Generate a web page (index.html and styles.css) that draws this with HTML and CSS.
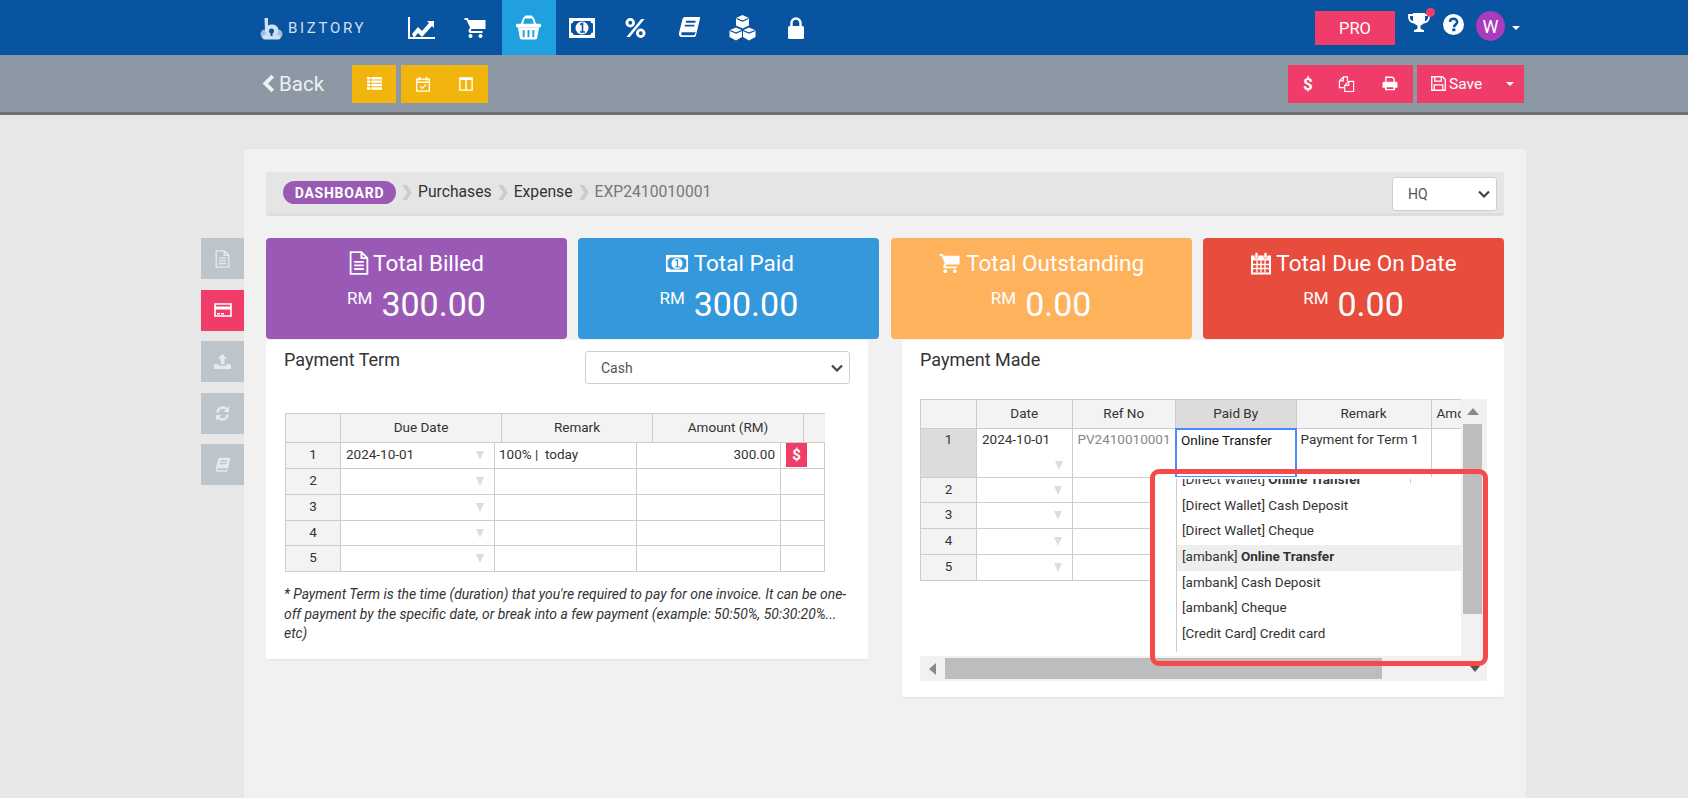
FILE: index.html
```html
<!DOCTYPE html>
<html lang="en">
<head>
<meta charset="utf-8">
<title>Expense EXP2410010001</title>
<link rel="stylesheet" href="styles.css">
</head>
<body>
<svg class="sprite" width="0" height="0">
  <symbol id="i-chart" viewBox="0 0 28 24"><path d="M1 1v21h26" fill="none" stroke="currentColor" stroke-width="2"/><path d="M4 18l6-7 4 4 7-8-2-2h7v7l-2-2-10 11-4-4-4 5z" fill="currentColor"/></symbol>
  <symbol id="i-cart" viewBox="0 0 24 24"><path d="M7 18c-1.1 0-2 .9-2 2s.9 2 2 2 2-.9 2-2-.9-2-2-2zM1 2v2h2l3.6 7.6-1.35 2.4c-.16.3-.25.6-.25 1 0 1.1.9 2 2 2h12v-2H7.4c-.14 0-.25-.1-.25-.25l.03-.1.9-1.65H22V4H5.2l-.9-2H1zm16 16c-1.1 0-2 .9-2 2s.9 2 2 2 2-.9 2-2-.9-2-2-2z" fill="currentColor"/></symbol>
  <symbol id="i-basket" viewBox="0 0 28 28"><path d="M7 11l2-6c.3-1 1-1.500 2-1.500h6c1 0 1.700.5 2 1.500l2 6" fill="none" stroke="currentColor" stroke-width="2"/><rect x="10" y="1.500" width="8" height="3" rx="1" fill="currentColor"/><rect x="1" y="10" width="26" height="4" rx="1.500" fill="currentColor"/><path d="M3 14h22l-2 11c-.2 1-1 1.500-2 1.500H7c-1 0-1.800-.5-2-1.500zM8 16.500v7.500h2v-7.500zm5 0v7.500h2v-7.500zm5 0v7.500h2v-7.500z" fill="currentColor" fill-rule="evenodd"/></symbol>
  <symbol id="i-money" viewBox="0 0 26 20"><path d="M0 0h26v20H0zM4.500 3c0 1.500-1 2.500-2.500 2.500v9c1.500 0 2.500 1 2.500 2.500h17c0-1.500 1-2.500 2.500-2.500v-9c-1.500 0-2.500-1-2.500-2.500z" fill="currentColor" fill-rule="evenodd"/><circle cx="13" cy="10" r="6.500" fill="currentColor"/><path d="M11 6.500l2.500-1v8M11 14h5" fill="none" stroke="var(--cut)" stroke-width="1.600"/></symbol>
  <symbol id="i-percent" viewBox="0 0 22 22"><path d="M17 1.500h3.500L5 20.500H1.500z" fill="currentColor"/><circle cx="5.500" cy="5.500" r="3.500" fill="none" stroke="currentColor" stroke-width="3"/><circle cx="16.500" cy="16.500" r="3.500" fill="none" stroke="currentColor" stroke-width="3"/></symbol>
  <symbol id="i-book" viewBox="0 0 24 24"><path d="M7 1h15c1 0 1.300.7 1 1.700L18.800 20c-.3 1-1 2-2.500 2H4c-2 0-3.500-1.500-3-4L4.500 4C5 2 6 1 7 1zM8.500 5l-.5 2h10l.5-2zM7.300 9l-.5 2h10l.5-2zM4.500 17c-1.500 0-1.500 3 0 3h12c.6 0 .9-.3 1.100-1l.9-2z" fill="currentColor" fill-rule="evenodd"/></symbol>
  <symbol id="i-cubes" viewBox="0 0 28 26"><path d="M14 0l6.500 3v7.500L14 13.500l-6.500-3V3zM7.500 12.500l6 2.700V22l-6 3.500L1 22v-6.800zm13 0l6.500 2.700V22l-6.500 3.500-6-3.500v-6.800z" fill="currentColor"/><path d="M8 3.500l6 2.500 6-2.500M1.500 15.500l6 2.500 6-2.500M14.500 15.500l6 2.500 6-2.500" fill="none" stroke="var(--cut)" stroke-width="1.300"/></symbol>
  <symbol id="i-lock" viewBox="0 0 16 22"><path d="M3.500 9V6a4.500 4.500 0 0 1 9 0v3" fill="none" stroke="currentColor" stroke-width="2.400"/><rect x="0" y="9" width="16" height="13" rx="1.500" fill="currentColor"/></symbol>
  <symbol id="i-list" viewBox="0 0 16 14"><path d="M0 0h3.500v2.600H0zm4.500 0H16v2.600H4.500zM0 3.700h3.500v2.600H0zm4.500 0H16v2.600H4.500zM0 7.400h3.500V10H0zm4.500 0H16V10H4.500zM0 11.100h3.500v2.600H0zm4.500 0H16v2.600H4.500z" fill="currentColor"/></symbol>
  <symbol id="i-calcheck" viewBox="0 0 16 18"><path d="M.8 3.500h14.400v13.700H.8zM.8 7h14.400" fill="none" stroke="currentColor" stroke-width="1.500"/><path d="M4 1v4M12 1v4" stroke="currentColor" stroke-width="1.800"/><path d="M4.500 11.500l2.500 2.500 4.500-4.500" fill="none" stroke="currentColor" stroke-width="1.300"/></symbol>
  <symbol id="i-columns" viewBox="0 0 16 16"><path d="M1 1h14v14H1zM8 1v14" fill="none" stroke="currentColor" stroke-width="1.600"/><path d="M1 1h14v2.500H1z" fill="currentColor"/></symbol>
  <symbol id="i-copy" viewBox="0 0 18 18"><path d="M1 5.500L5.500 1H10v5M1 5.500h4.500V1M1 5.500V13h5.500" fill="none" stroke="currentColor" stroke-width="1.300"/><path d="M7 10.500L11.500 6H17v11.500H7zM7 10.500h4.500V6" fill="none" stroke="currentColor" stroke-width="1.300"/></symbol>
  <symbol id="i-print" viewBox="0 0 18 18"><path d="M4 7V1.500h8l2 2V7" fill="none" stroke="currentColor" stroke-width="1.600"/><path d="M2 7h14c1 0 2 .8 2 2v5h-3v3H3v-3H0V9c0-1.200 1-2 2-2zm3 6.500v2h8v-2z" fill="currentColor" fill-rule="evenodd"/></symbol>
  <symbol id="i-save" viewBox="0 0 16 16"><path d="M.8.800h11.500l2.900 2.900v11.500H.8z" fill="none" stroke="currentColor" stroke-width="1.400"/><path d="M4 1v4.500h7V1M3.500 15V9.500h9V15" fill="none" stroke="currentColor" stroke-width="1.400"/></symbol>
  <symbol id="i-trophy" viewBox="0 0 22 22"><path d="M5 1h12v7c0 3-2.500 5-4.500 5.500V16c0 1 1.500 1.800 3.500 2v2H6v-2c2-.2 3.500-1 3.500-2v-2.500C7.500 13 5 11 5 8z" fill="currentColor"/><path d="M5 3H1v2c0 3 2 5 5 5.500M17 3h4v2c0 3-2 5-5 5.500" fill="none" stroke="currentColor" stroke-width="1.800"/></symbol>
  <symbol id="i-help" viewBox="0 0 20 20"><circle cx="10" cy="10" r="10" fill="currentColor"/><path d="M6.500 7.500C6.800 5.500 8.300 4.500 10 4.500c2 0 3.500 1.300 3.500 3 0 2.500-3 2.500-3 5" fill="none" stroke="var(--cut)" stroke-width="2.400"/><rect x="8.800" y="13.800" width="3" height="2.600" fill="var(--cut)"/></symbol>
  <symbol id="i-file" viewBox="0 0 16 20"><path d="M1 1h9l5 5v13H1zM10 1v5h5" fill="none" stroke="currentColor" stroke-width="1.500"/><path d="M4 9h8M4 12h8M4 15h8" stroke="currentColor" stroke-width="1.500"/></symbol>
  <symbol id="i-card" viewBox="0 0 18 14"><path d="M1 1h16v12H1z" fill="none" stroke="currentColor" stroke-width="1.600"/><path d="M1 3.500h16v3H1zM3 10h3v1.400H3zm4 0h3v1.400H7z" fill="currentColor"/></symbol>
  <symbol id="i-upload" viewBox="0 0 18 16"><path d="M9 0l5 5h-3v6H7V5H4zM0 11h5v1.500h8V11h5v5H0z" fill="currentColor"/></symbol>
  <symbol id="i-refresh" viewBox="0 0 16 18"><path d="M2.500 8a5.800 5.800 0 0 1 10-3.500M13.500 10a5.800 5.800 0 0 1-10 3.500" fill="none" stroke="currentColor" stroke-width="2.600"/><path d="M15 1v6.500H9zM1 17v-6.500h6z" fill="currentColor"/></symbol>
  <symbol id="i-calendar" viewBox="0 0 22 22"><path d="M1 3h20v19H1z" fill="currentColor"/><path d="M3 8h16v12H3z" fill="var(--cut)"/><path d="M3 12h16M3 16h16M7 8v12M11 8v12M15 8v12" stroke="currentColor" stroke-width="1.300"/><rect x="5" y="0" width="3" height="6" rx="1.200" fill="currentColor" stroke="var(--cut)" stroke-width=".6"/><rect x="14" y="0" width="3" height="6" rx="1.200" fill="currentColor" stroke="var(--cut)" stroke-width=".6"/></symbol>
  <symbol id="i-crumb" viewBox="0 0 10 18"><path d="M0 1h5l5 8-5 8H0l5-8z" fill="currentColor"/></symbol>
  <symbol id="i-chev" viewBox="0 0 12 8"><path d="M1 1.500l5 5 5-5" fill="none" stroke="currentColor" stroke-width="2.200"/></symbol>
  <symbol id="i-back" viewBox="0 0 12 18"><path d="M10 2L3 9l7 7" fill="none" stroke="currentColor" stroke-width="3.600"/></symbol>
  <symbol id="i-logo" viewBox="0 0 22 22"><path d="M4 0h3.500v7.500c1.200-.8 2.500-1 4-1 4 0 6.500 2.500 6.500 6 0 4-3 6-7 6-4 0-6.500-2-6.500-6z" fill="currentColor"/><circle cx="4.500" cy="16" r="4.500" fill="currentColor" opacity=".75"/><circle cx="17.500" cy="16" r="4.500" fill="currentColor" opacity=".75"/><rect x="2" y="17" width="18" height="4.500" rx="2" fill="currentColor"/><circle cx="11" cy="13" r="2.500" fill="#0854a0"/><rect x="10" y="14" width="2" height="4" fill="#0854a0"/></symbol>
</svg>

<header class="topbar">
  <a class="logo"><svg class="logo-mark"><use href="#i-logo"/></svg><span class="logo-text">BIZTORY</span></a>
  <nav class="nav">
    <a class="nav-item"><svg class="ic-chart"><use href="#i-chart"/></svg></a>
    <a class="nav-item"><svg class="ic-cart"><use href="#i-cart"/></svg></a>
    <a class="nav-item active"><svg class="ic-basket"><use href="#i-basket"/></svg></a>
    <a class="nav-item"><svg class="ic-money"><use href="#i-money"/></svg></a>
    <a class="nav-item"><svg class="ic-percent"><use href="#i-percent"/></svg></a>
    <a class="nav-item"><svg class="ic-book"><use href="#i-book"/></svg></a>
    <a class="nav-item"><svg class="ic-cubes"><use href="#i-cubes"/></svg></a>
    <a class="nav-item"><svg class="ic-lock"><use href="#i-lock"/></svg></a>
  </nav>
  <div class="top-right">
    <a class="pro">PRO</a>
    <span class="trophy"><svg class="ic-trophy"><use href="#i-trophy"/></svg><i class="dot"></i></span>
    <svg class="ic-help"><use href="#i-help"/></svg>
    <span class="avatar">W</span>
    <i class="caret caret-top"></i>
  </div>
</header>

<div class="subbar">
  <a class="back"><svg class="ic-back"><use href="#i-back"/></svg><span>Back</span></a>
  <div class="yellow-group one"><svg class="ic-list"><use href="#i-list"/></svg></div>
  <div class="yellow-group two"><svg class="ic-calcheck"><use href="#i-calcheck"/></svg><svg class="ic-columns"><use href="#i-columns"/></svg></div>
  <div class="actions">
    <div class="pink-group"><span class="dollar">$</span><svg class="ic-copy"><use href="#i-copy"/></svg><svg class="ic-print"><use href="#i-print"/></svg></div>
    <div class="pink-save"><svg class="ic-save"><use href="#i-save"/></svg><span class="save-label">Save</span><i class="caret caret-save"></i></div>
  </div>
</div>

<main class="main">
  <aside class="tabs">
    <a class="tab"><svg class="ic-tab-file"><use href="#i-file"/></svg></a>
    <a class="tab on"><svg class="ic-tab-card"><use href="#i-card"/></svg></a>
    <a class="tab"><svg class="ic-tab-upload"><use href="#i-upload"/></svg></a>
    <a class="tab"><svg class="ic-tab-refresh"><use href="#i-refresh"/></svg></a>
    <a class="tab"><svg class="ic-tab-book"><use href="#i-book"/></svg></a>
  </aside>

  <section class="panel">
    <div class="crumbs">
      <a class="pill">DASHBOARD</a>
      <svg class="sep"><use href="#i-crumb"/></svg><a class="crumb">Purchases</a>
      <svg class="sep"><use href="#i-crumb"/></svg><a class="crumb">Expense</a>
      <svg class="sep"><use href="#i-crumb"/></svg><span class="crumb current">EXP2410010001</span>
      <div class="select select-hq"><span>HQ</span><svg class="chev"><use href="#i-chev"/></svg></div>
    </div>

    <div class="stats">
      <div class="stat purple"><div class="stat-title"><svg class="ic-s-file"><use href="#i-file"/></svg>Total Billed</div><div class="stat-value"><sup>RM</sup>300.00</div></div>
      <div class="stat blue"><div class="stat-title"><svg class="ic-s-money"><use href="#i-money"/></svg>Total Paid</div><div class="stat-value"><sup>RM</sup>300.00</div></div>
      <div class="stat orange"><div class="stat-title"><svg class="ic-s-cart"><use href="#i-cart"/></svg>Total Outstanding</div><div class="stat-value"><sup>RM</sup>0.00</div></div>
      <div class="stat red"><div class="stat-title"><svg class="ic-s-cal"><use href="#i-calendar"/></svg>Total Due On Date</div><div class="stat-value"><sup>RM</sup>0.00</div></div>
    </div>

    <div class="columns">
      <div class="card card-left">
        <div class="card-head">
          <h2>Payment Term</h2>
          <div class="select select-term"><span>Cash</span><svg class="chev"><use href="#i-chev"/></svg></div>
        </div>
        <div class="grid-wrap">
          <div class="row lhead">
            <div class="c"></div><div class="c">Due Date</div><div class="c">Remark</div><div class="c">Amount (RM)</div><div class="c noline"></div>
          </div>
          <div class="row lbody h26">
            <div class="c rh">1</div><div class="c date">2024-10-01<i class="tri"></i></div><div class="c txt">100% |&nbsp; today</div><div class="c num">300.00</div><div class="c act"><span class="pay">$</span></div>
          </div>
          <div class="row lbody h26"><div class="c rh">2</div><div class="c date"><i class="tri"></i></div><div class="c"></div><div class="c"></div><div class="c"></div></div>
          <div class="row lbody h26"><div class="c rh">3</div><div class="c date"><i class="tri"></i></div><div class="c"></div><div class="c"></div><div class="c"></div></div>
          <div class="row lbody h25"><div class="c rh">4</div><div class="c date"><i class="tri"></i></div><div class="c"></div><div class="c"></div><div class="c"></div></div>
          <div class="row lbody h26"><div class="c rh">5</div><div class="c date"><i class="tri"></i></div><div class="c"></div><div class="c"></div><div class="c"></div></div>
        </div>
        <p class="note">* Payment Term is the time (duration) that you're required to pay for one invoice. It can be one-off payment by the specific date, or break into a few payment (example: 50:50%, 50:30:20%... etc)</p>
      </div>

      <div class="card card-right">
        <h2 class="made">Payment Made</h2>
        <div class="sheet">
          <div class="sheet-top">
            <div class="sheet-grid">
              <div class="row rhead">
                <div class="c"></div><div class="c">Date</div><div class="c">Ref No</div><div class="c hl">Paid By</div><div class="c">Remark</div><div class="c amo">Amo</div>
              </div>
              <div class="row rbody tall">
                <div class="c rh hl top">1</div><div class="c date top">2024-10-01<i class="tri low"></i></div><div class="c ref top">PV2410010001</div><div class="c focus">Online Transfer</div><div class="c txt top">Payment for Term 1</div><div class="c"></div>
              </div>
              <div class="row rbody h25"><div class="c rh">2</div><div class="c date"><i class="tri"></i></div><div class="c"></div><div class="c"></div><div class="c"></div><div class="c"></div></div>
              <div class="row rbody h26"><div class="c rh">3</div><div class="c date"><i class="tri"></i></div><div class="c"></div><div class="c"></div><div class="c"></div><div class="c"></div></div>
              <div class="row rbody h26"><div class="c rh">4</div><div class="c date"><i class="tri"></i></div><div class="c"></div><div class="c"></div><div class="c"></div><div class="c"></div></div>
              <div class="row rbody h26"><div class="c rh">5</div><div class="c date"><i class="tri"></i></div><div class="c"></div><div class="c"></div><div class="c"></div><div class="c"></div></div>
            </div>
            <div class="vscroll"><i class="arrow-up"></i><i class="vthumb"></i></div>
          </div>
          <div class="hscroll"><i class="arrow-left"></i><i class="hthumb"></i><i class="arrow-down"></i></div>
          <div class="dropdown">
            <ul class="drop-list">
              <li>[Direct Wallet] <b>Online Transfer</b></li>
              <li>[Direct Wallet] Cash Deposit</li>
              <li>[Direct Wallet] Cheque</li>
              <li class="sel">[ambank] <b>Online Transfer</b></li>
              <li>[ambank] Cash Deposit</li>
              <li>[ambank] Cheque</li>
              <li>[Credit Card] Credit card</li>
            </ul>
          </div>
          <div class="annotation"></div>
        </div>
      </div>
    </div>
  </section>
</main>
</body>
</html>
```

FILE: styles.css
```css
* { box-sizing: border-box; }
html, body { margin: 0; height: 100%; }
body {
  height: 798px;
  overflow: hidden;
  background: #e7e7e7;
  color: #333;
  font-family: Roboto, "Liberation Sans", sans-serif;
  font-size: 13.5px;
}
.sprite { position: absolute; }
svg { display: block; flex: none; color: inherit; }

/* top bar */
.topbar {
  --cut: #0854a0;
  display: flex;
  align-items: stretch;
  height: 55px;
  padding: 0 168px 0 260px;
  background: #0854a0;
  color: #fff;
}
.logo { display: flex; align-items: center; width: 135px; gap: 5px; color: #cfe0f0; }
.logo-mark { width: 23px; height: 22px; margin-top: 2px; }
.logo-text { font-size: 15px; letter-spacing: 2.7px; }
.nav { display: flex; }
.nav-item { width: 53.5px; display: flex; align-items: center; justify-content: center; }
.nav-item.active { background: #20a0de; --cut: #20a0de; }
.ic-chart { width: 28px; height: 24px; }
.ic-cart { width: 25px; height: 24px; }
.ic-basket { width: 27px; height: 27px; }
.ic-money { width: 26px; height: 20px; }
.ic-percent { width: 21px; height: 22px; }
.ic-book { width: 23px; height: 23px; }
.ic-cubes { width: 29px; height: 26px; }
.ic-lock { width: 16px; height: 22px; }
.top-right { display: flex; align-items: center; margin-left: auto; }
.pro {
  width: 80px; height: 34px; margin-top: 1px;
  display: flex; align-items: center; justify-content: center;
  background: #f03c69; font-size: 16.5px;
}
.trophy { position: relative; margin-left: 13px; margin-top: -9px; }
.ic-trophy { width: 22px; height: 22px; }
.dot { position: absolute; top: -4px; right: -5px; width: 9px; height: 9px; border-radius: 50%; background: #f03c69; }
.ic-help { width: 21px; height: 21px; margin-left: 13px; margin-top: -7px; }
.avatar {
  width: 29px; height: 30px; margin-left: 12px; margin-top: -3px;
  display: flex; align-items: center; justify-content: center;
  border-radius: 50%; background: #a93bbd; font-size: 18px;
}
.caret { display: block; width: 0; height: 0; border-style: solid; border-width: 4px 4px 0; border-color: #fff transparent transparent; }
.caret-top { margin-left: 7px; }

/* sub bar */
.subbar {
  display: flex;
  align-items: center;
  height: 60px;
  padding: 0 164px 0 262px;
  background: #8c98a4;
  border-bottom: 3px solid #6f6f6f;
  color: #fff;
}
.subbar > *, .actions > * { height: 38px; }
.back { display: flex; align-items: center; gap: 4px; width: 90px; font-size: 20.5px; color: #eef1f3; }
.ic-back { width: 13px; height: 19px; margin-top: -1px; }
.yellow-group { display: flex; align-items: center; justify-content: space-around; background: #f2b50e; }
.yellow-group.one { width: 44px; justify-content: center; margin-right: 5px; }
.yellow-group.two { width: 87px; }
.ic-list { width: 15px; height: 13px; }
.ic-calcheck { width: 14px; height: 16px; }
.ic-columns { width: 14px; height: 14px; }
.actions { display: flex; margin-left: auto; gap: 4px; }
.pink-group, .pink-save { display: flex; align-items: center; background: #f03c69; }
.pink-group { width: 125px; padding-left: 15px; }
.dollar { font-size: 17px; font-weight: 700; width: 30px; }
.ic-copy { width: 17px; height: 16px; margin-left: 5px; }
.ic-print { width: 16px; height: 15px; margin-left: 27px; }
.pink-save { width: 107px; padding-left: 14px; }
.ic-save { width: 15px; height: 15px; }
.save-label { font-size: 15.5px; margin-left: 3px; }
.caret-save { margin-left: 24px; }

/* main */
.main { display: flex; padding: 34px 0 0 201px; }
.tabs { width: 43px; padding-top: 89px; display: flex; flex-direction: column; gap: 10.500px; }
.tab { height: 41px; display: flex; align-items: center; justify-content: center; background: #bec5ca; color: #e7eaec; }
.tab.on { background: #f03c69; color: #fff; }
.ic-tab-file { width: 15px; height: 18px; }
.ic-tab-card { width: 18px; height: 14px; }
.ic-tab-upload { width: 17px; height: 15px; }
.ic-tab-refresh { width: 15px; height: 17px; }
.ic-tab-book { width: 16px; height: 16px; }

.panel {
  width: 1282px;
  height: 649px;
  padding: 23px 22px 0;
  background: #f1f1f1;
  border-radius: 4px 4px 0 0;
}

/* breadcrumb */
.crumbs {
  display: flex; align-items: center;
  height: 44px;
  padding: 0 7px 0 17px;
  background: #e5e5e5;
  border-bottom: 3px solid #dddddd;
  border-radius: 3px;
  font-size: 15.700px;
}
.pill {
  display: flex; align-items: center; justify-content: center;
  width: 113px; height: 23px;
  border-radius: 12px;
  background: #9b59b6; color: #fff;
  font-size: 14px; font-weight: 700; letter-spacing: .75px;
}
.sep { width: 10px; height: 17px; color: #cccccc; margin: 0 6px; }
.crumb { color: #333; padding-bottom: 2px; }
.crumb.current { color: #777; }
.select {
  display: flex; align-items: center; justify-content: space-between;
  background: #fff; border: 1px solid #cfcfcf; border-radius: 3px;
  color: #555; font-size: 14px;
}
.chev { width: 12px; height: 8px; color: #444; }
.select-hq { width: 105px; height: 34px; margin-left: auto; margin-top: 3px; padding: 0 6px 0 15px; }
.select-term { width: 265px; height: 33px; padding: 0 6px 0 15px; }

/* stats */
.stats { display: grid; grid-template-columns: repeat(4, 301px); justify-content: space-between; margin-top: 22px; }
.stat { height: 101px; border-radius: 4px; color: #fff; text-align: center; padding-top: 10px; }
.purple { background: #9b59b6; --cut: #9b59b6; }
.blue { background: #3498db; --cut: #3498db; }
.orange { background: #ffb25c; --cut: #ffb25c; }
.red { background: #e74c3c; --cut: #e74c3c; }
.stat-title { display: flex; align-items: center; justify-content: center; gap: 4px; height: 30px; font-size: 22.5px; }
.ic-s-file { width: 20px; height: 24px; }
.ic-s-money { width: 26px; height: 17px; }
.ic-s-cart { width: 24px; height: 23px; }
.ic-s-cal { width: 22px; height: 23px; }
.stat-value { font-size: 34px; line-height: 40px; margin-top: 6px; }
.stat-value sup { font-size: 17px; line-height: 0; vertical-align: 12px; margin-right: 9px; }

/* cards */
.columns { display: grid; grid-template-columns: 602px 602px; gap: 34px; margin-top: 1px; align-items: start; }
.card { background: #fff; border-radius: 4px; border-bottom: 2px solid #e9e9e9; position: relative; }
.card h2 { margin: 0; font-size: 18px; font-weight: 400; color: #333; line-height: 24px; }
.card-left { height: 321px; padding: 8px 18px 0 18px; }
.card-head { display: flex; justify-content: space-between; }
.card-head .select { margin-top: 3px; }
.card-right { height: 359px; padding: 8px 17px 0 18px; }
.made { margin-bottom: 27px !important; }

/* spreadsheet grids */
.grid-wrap { margin: 29px 0 0 1px; width: 540px; border-left: 1px solid #ccc; border-top: 1px solid #ccc; }
.row { display: grid; font-size: 13.5px; }
.c {
  display: flex; align-items: center;
  padding: 0 5px;
  border-right: 1px solid #ccc; border-bottom: 1px solid #ccc;
  white-space: nowrap; overflow: hidden; position: relative;
}
.lhead { grid-template-columns: 55px 161px 151px 151px 21px; height: 29px; background: #f3f3f3; }
.lhead .c, .rhead .c { justify-content: center; padding-bottom: 2px; }
.noline { border-right: 0; }
.lbody { grid-template-columns: 55px 154px 142px 144px 44px; }
.h26 { height: 26px; }
.h25 { height: 25px; }
.rh { justify-content: center; background: #f3f3f3; padding-bottom: 3px; }
.date { padding-bottom: 3px; }
.txt { padding-left: 4px; padding-bottom: 3px; }
.num { justify-content: flex-end; padding-bottom: 3px; }
.act { padding: 0 0 1px 5px; }
.pay {
  display: flex; align-items: center; justify-content: center;
  width: 21px; height: 24px;
  background: #f03c69; color: #fff; font-size: 15px; font-weight: 700;
}
.tri {
  position: absolute; right: 10px; top: 8px;
  width: 0; height: 0;
  border-style: solid; border-width: 9px 4px 0;
  border-color: #dddddd transparent transparent;
}
.tri.low { top: auto; bottom: 7px; right: 9px; }
.note { margin: 13px 0 0; font-size: 13.900px; font-style: italic; line-height: 19.500px; color: #333; width: 568px; }

.sheet { position: relative; width: 567px; }
.sheet-top { display: flex; height: 257px; }
.sheet-grid { width: 541px; height: 182px; overflow: hidden; border-left: 1px solid #ccc; border-top: 1px solid #ccc; }
.rhead, .rbody { grid-template-columns: 56px 95.500px 103.500px 120.500px 135px 30px; }
.rhead { height: 29px; background: #f3f3f3; }
.amo { justify-content: flex-start !important; border-right: 0; padding: 0 0 0 5px; }
.hl { background: #dcdcdc; }
.tall { height: 49px; }
.top { align-items: flex-start; padding-top: 2px; padding-bottom: 0; }
.ref { color: #888; }
.focus { align-items: flex-start; padding: 2px 4px; border: 2px solid #4b89ff; color: #111; margin: -1px 0 0 -1px; }
.vscroll { position: relative; width: 26px; background: #f1f1f1; }
.arrow-up {
  position: absolute; left: 6px; top: 9px;
  width: 0; height: 0;
  border-style: solid; border-width: 0 6px 7px;
  border-color: transparent transparent #8a8a8a;
}
.vthumb { position: absolute; left: 2px; top: 25px; width: 19px; height: 190px; background: #bdbdbd; }
.hscroll { position: relative; height: 25px; background: #f1f1f1; }
.arrow-left {
  position: absolute; left: 9px; top: 7px;
  width: 0; height: 0;
  border-style: solid; border-width: 6px 7px 6px 0;
  border-color: transparent #8a8a8a transparent transparent;
}
.hthumb { position: absolute; left: 25px; top: 2px; width: 437px; height: 21px; background: #bdbdbd; }
.arrow-down {
  position: absolute; right: 7px; top: 10px;
  width: 0; height: 0;
  border-style: solid; border-width: 6px 5px 0;
  border-color: #555 transparent transparent;
}

/* dropdown and annotation lie over the grid */
.dropdown {
  position: absolute; left: 235px; top: 78px;
  width: 306px; height: 179px;
  padding-left: 21px;
  background: #fff;
  overflow: hidden;
}
.dropdown::before {
  content: ""; position: absolute; left: 21px; right: 0; top: 0;
  height: 2px; background: #fff; z-index: 1;
}
.dropdown::after {
  content: ""; position: absolute; left: 255px; top: 0;
  width: 1px; height: 6px; background: #ccc;
}
.drop-list {
  margin: -9px 0 0; padding: 0; list-style: none;
  height: 184px;
  border-left: 1px solid #ccc;
  font-size: 13.500px;
  color: #333;
}
.drop-list li { height: 25.700px; line-height: 22px; padding: 0 5px; white-space: nowrap; }
.drop-list li.sel { background: #eeeeee; }
.annotation {
  position: absolute; left: 229.5px; top: 70px;
  width: 338.5px; height: 197px;
  border: 5px solid #f54a4a; border-radius: 9px;
}
```
